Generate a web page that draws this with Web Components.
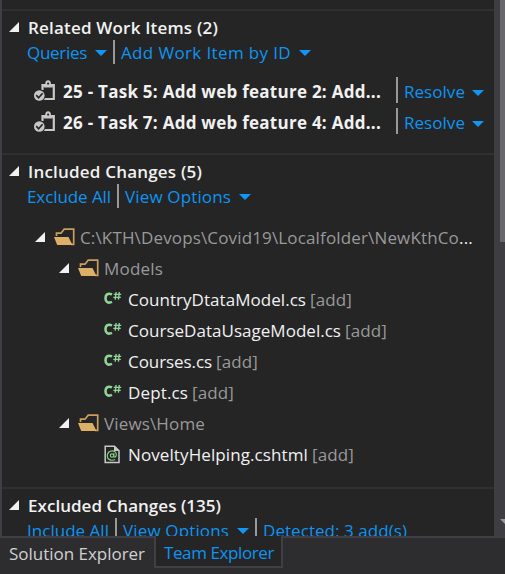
<!DOCTYPE html>
<html lang="en">
<head>
<meta charset="utf-8">
<title>Team Explorer</title>
<style>
html,body{margin:0;height:100%;background:#2d2d30;overflow:hidden}
body{font-family:"Open Sans","Noto Sans",sans-serif;font-size:17px;color:#f1f1f1}
</style>
</head>
<body>
<team-panel></team-panel>
<script>
const define = (name, html, setup) => {
  const t = document.createElement('template');
  t.innerHTML = html;
  customElements.define(name, class extends HTMLElement {
    constructor() {
      super();
      this.attachShadow({mode: 'open'}).append(t.content.cloneNode(true));
    }
    connectedCallback() { if (setup) setup(this); }
  });
};

/* A label whose tracking is adjusted to fill the width in "w". */
define('fit-text', `<style>
:host{display:block;flex:none;white-space:pre;line-height:24px}
span{display:inline-block}
</style><span><slot></slot></span>`, el => {
  const w = +el.getAttribute('w');
  const span = el.shadowRoot.querySelector('span');
  el.style.width = w + 'px';
  const natural = span.getBoundingClientRect().width;
  span.style.letterSpacing = (w - natural) / el.textContent.length + 'px';
});

define('drop-arrow', `<style>:host{display:block;flex:none;width:12px;height:6px;margin:2px 0 0 8px}svg{display:block}</style>
<svg width="12" height="6"><path d="M0 0H12L6 6Z" fill="#1097f5"/></svg>`);

define('bar-divider', `<style>:host{display:block;flex:none;align-self:stretch;width:2px;background:#999}</style>`);

define('expand-mark', `<style>:host{display:block;flex:none;width:10px;height:10px}svg{display:block}</style>
<svg width="10" height="10"><path d="M10 0V10H0Z" fill="#f1f1f1"/></svg>`);

define('folder-icon', `<style>:host{display:block;flex:none;width:22px;height:18px}svg{display:block}</style>
<svg width="22" height="18"><path d="M2.5 8V5.2H7L10.2 1.2H19.7V16.3H17" fill="none" stroke="#c99e5e" stroke-width="1.7"/><path d="M0 9H14.5L18.5 17H3.2Z" fill="#dcb067"/></svg>`);

define('task-icon', `<style>:host{display:block;flex:none;width:22px;height:21px}svg{display:block}</style>
<svg width="22" height="21"><path d="M8.5 10V5.2H19.8V19H9" fill="none" stroke="#c8c8c8" stroke-width="2.2"/><path d="M9.5 4.1H11.2C11.2 1.6 12.2 .3 14.1 .3S17 1.6 17 4.1H18.7V7.6H9.5Z" fill="#c8c8c8"/><circle cx="14.1" cy="3.6" r="1.1" fill="#252526"/><circle cx="5.3" cy="15.5" r="6.3" fill="#252526"/><circle cx="5.3" cy="15.5" r="5.3" fill="#c8c8c8"/><path d="M2.2 15.2L4.6 17.8L8.6 13.3" fill="none" stroke="#252526" stroke-width="1.7"/></svg>`);

define('csharp-icon', `<style>:host{display:block;flex:none;width:18px;height:14px}svg{display:block}</style>
<svg width="18" height="14" fill="none" stroke="#8fd596"><path d="M8 3.4C3.5 1.5 1.5 4 1.5 7.2S3.6 12.8 8 10.9" stroke-width="2.6"/><path d="M12.1 1L11.2 8.7M15.3 1L14.4 8.7M9.7 3.4H17.2M9.3 6.4H16.8" stroke-width="1.4"/></svg>`);

define('razor-icon', `<style>:host{display:block;flex:none;width:18px;height:19px}svg{display:block}</style>
<svg width="18" height="19" fill="none"><path d="M1.2 1.2H10.5L15 5.7V17.5H1.2Z" stroke="#c8c8c8" stroke-width="1.5"/><path d="M10 1V6H15.5Z" fill="#c8c8c8"/><g stroke="#89d185" stroke-width="1.15"><circle cx="8" cy="10.5" r="1.7"/><path d="M10 8.3L9.7 11.3C10.2 12.8 12.3 12 12.3 9.8C12.3 7.4 10.5 5.8 8.2 5.8C5.3 5.8 3.3 8 3.3 10.8S5.5 15.2 8 15.2C9.2 15.2 10.2 15 11 14.5"/></g></svg>`);

define('link-bar', `<style>
:host{display:flex;align-items:center;height:24px;padding-left:27px;color:#0e94f1}
::slotted(fit-text){margin-top:1px}
</style><slot></slot>`);

define('changes-section', `<style>
:host{display:flex;flex-direction:column;flex:none;box-sizing:border-box;border-top:2px solid #303033;padding-top:5px}
header{display:flex;align-items:center;height:24px;padding-left:7px;gap:9px;font-weight:600}
expand-mark{margin-top:-2px}
</style><header><expand-mark></expand-mark><slot name="title"></slot></header><slot></slot>`);

define('work-item', `<style>
:host{display:flex;align-items:center;height:31px;padding-left:34px;font-weight:700}
task-icon{margin-right:7px}
::slotted(fit-text){margin-top:2px}
bar-divider{margin:2px 6px 3px 15px}
.r{color:#0e94f1;font-weight:400;margin-top:2px}
drop-arrow{margin-left:7px;margin-top:4px}
</style><task-icon></task-icon><slot></slot><bar-divider></bar-divider><fit-text class="r" w="61">Resolve</fit-text><drop-arrow></drop-arrow>`);

define('folder-row', `<style>
:host{display:flex;align-items:center;height:31px;color:#999}
folder-icon{margin:0 4px 2px 9px}
expand-mark{margin-top:-1px}
</style><expand-mark></expand-mark><folder-icon></folder-icon><slot></slot>`);

define('file-row', `<style>
:host{display:flex;align-items:center;height:31px;padding-left:104px}
.a{color:#999;margin-left:4px}
.icon{width:18px;margin-right:6px}
csharp-icon{margin-top:-3px}
</style><div class="icon"><slot name="icon"><csharp-icon></csharp-icon></slot></div><slot></slot><fit-text class="a" w="42">[add]</fit-text>`);

define('scroll-track', `<style>
:host{display:flex;flex-direction:column;justify-content:space-between;align-items:flex-end;flex:none;width:11px;background:#3e3e42}
.thumb{width:5px;height:242px;background:#686868}
svg{display:block;margin-bottom:11px}
</style><div class="thumb"></div><svg width="5" height="6"><path d="M0 0H12L6 6Z" fill="#999"/></svg>`);

define('tab-strip', `<style>
:host{display:flex;height:38px;background:#2d2d30;color:#d0d0d0}
.tab{box-sizing:border-box;flex:none;height:32px}
.idle{width:154px;border-top:2px solid #3f3f46;padding:4px 0 0 9px}
.active{width:129px;background:#252526;border:2px solid #3f3f46;border-top:0;padding:5px 0 0 8px;color:#0e94f1}
.rest{flex:1;border-top:2px solid #3f3f46}
</style><div class="tab idle"><fit-text w="136">Solution Explorer</fit-text></div><div class="tab active"><fit-text w="110">Team Explorer</fit-text></div><div class="rest"></div>`);

define('team-panel', `<style>
:host{display:flex;flex-direction:column;width:505px;height:574px;overflow:hidden}
main{display:flex;height:536px;flex:none}
.content{box-sizing:border-box;width:494px;height:536px;overflow:hidden;background:#252526;padding-top:9px;display:flex;flex-direction:column;box-shadow:inset 2px 0 #3f3f46}
changes-section{margin-left:2px}
changes-section>*{margin-left:-2px}
changes-section>fit-text{margin-left:0}
.one{height:144px}.two{height:334px}
.list{padding-top:11px}
.tree{padding-top:14px}
bar-divider{margin:0 6px 0 6px}
</style>
<main><div class="content">
<changes-section class="one"><fit-text slot="title" w="190">Related Work Items (2)</fit-text>
<link-bar><fit-text w="60">Queries</fit-text><drop-arrow></drop-arrow><bar-divider></bar-divider><fit-text w="170">Add Work Item by ID</fit-text><drop-arrow></drop-arrow></link-bar>
<div class="list"><work-item><fit-text w="318">25 - Task 5: Add web feature 2: Add...</fit-text></work-item><work-item><fit-text w="318">26 - Task 7: Add web feature 4: Add...</fit-text></work-item></div>
</changes-section>
<changes-section class="two"><fit-text slot="title" w="174">Included Changes (5)</fit-text>
<link-bar><fit-text w="84">Exclude All</fit-text><bar-divider></bar-divider><fit-text w="106">View Options</fit-text><drop-arrow></drop-arrow></link-bar>
<div class="tree">
<folder-row style="padding-left:35px"><fit-text w="379">C:\\KTH\\Devops\\Covid19\\Localfolder\\NewKthCo</fit-text><fit-text w="14" style="color:#f1f1f1">...</fit-text></folder-row>
<folder-row style="padding-left:59px"><fit-text w="59">Models</fit-text></folder-row>
<file-row><fit-text w="178">CountryDtataModel.cs</fit-text></file-row>
<file-row><fit-text w="213">CourseDataUsageModel.cs</fit-text></file-row>
<file-row><fit-text w="84">Courses.cs</fit-text></file-row>
<file-row><fit-text w="60">Dept.cs</fit-text></file-row>
<folder-row style="padding-left:59px"><fit-text w="101">Views\\Home</fit-text></folder-row>
<file-row><razor-icon slot="icon"></razor-icon><fit-text w="180">NoveltyHelping.cshtml</fit-text></file-row>
</div></changes-section>
<changes-section><fit-text slot="title" w="193">Excluded Changes (135)</fit-text>
<link-bar><fit-text w="82">Include All</fit-text><bar-divider></bar-divider><fit-text w="106">View Options</fit-text><drop-arrow></drop-arrow><bar-divider></bar-divider><fit-text w="144">Detected: 3 add(s)</fit-text></link-bar>
</changes-section>
</div><scroll-track></scroll-track></main>
<tab-strip></tab-strip>`);
</script>
</body>
</html>
